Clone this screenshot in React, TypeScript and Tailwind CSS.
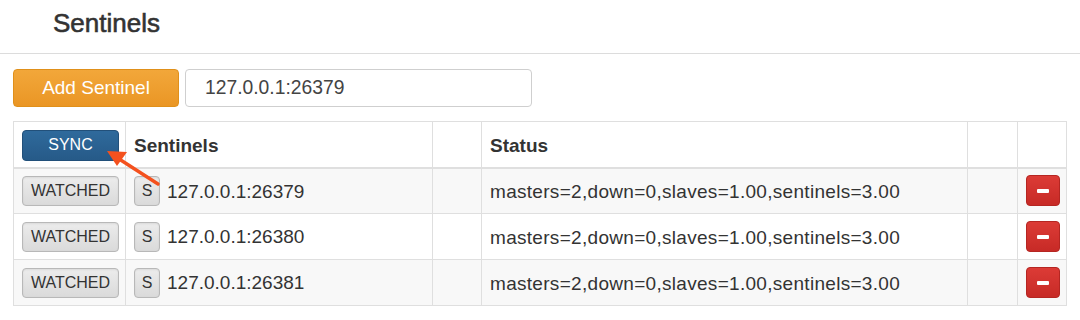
import React from 'react';

const rows = [
  { addr: '127.0.0.1:26379', striped: true },
  { addr: '127.0.0.1:26380', striped: false },
  { addr: '127.0.0.1:26381', striped: true },
];

const status = 'masters=2,down=0,slaves=1.00,sentinels=3.00';

function GrayButton({ children, className = '' }: { children: React.ReactNode; className?: string }) {
  return (
    <button
      className={`h-[30px] rounded-[4px] border border-[#b8b8b8] bg-gradient-to-b from-[#ececec] to-[#dadada] text-[16px] text-[#333] shadow-[inset_0_1px_2px_rgba(0,0,0,0.08)] ${className}`}
    >
      {children}
    </button>
  );
}

export default function App() {
  return (
    <div className="w-[1080px] h-[320px] overflow-hidden bg-white text-[#333] font-['Liberation_Sans',Arial,sans-serif]">
      {/* Header */}
      <div className="h-[54px] border-b border-[#dcdcdc] pl-[53px] pt-[8px]">
        <h1 className="text-[26px] leading-[30px] [-webkit-text-stroke:0.6px_#333]">Sentinels</h1>
      </div>

      {/* Add form */}
      <div className="flex gap-[6px] pl-[13px] mt-[15px]">
        <button className="w-[166px] h-[38px] rounded-[4px] border border-[#e0901a] bg-gradient-to-b from-[#f2a73a] to-[#ea9624] text-white text-[19px]">
          Add Sentinel
        </button>
        <div className="w-[347px] h-[38px] rounded-[4px] border border-[#cfcfcf] flex items-center pl-[19px] text-[19.3px] text-[#444]">
          127.0.0.1:26379
        </div>
      </div>

      {/* Table */}
      <div className="relative ml-[13px] mt-[14px] w-[1053px]">
        <table className="w-[1053px] table-fixed border-collapse border border-[#dfdfdf] text-[19px]">
          <colgroup>
            <col className="w-[112px]" />
            <col className="w-[307px]" />
            <col className="w-[49px]" />
            <col className="w-[486px]" />
            <col className="w-[50px]" />
            <col className="w-[49px]" />
          </colgroup>
          <thead>
            <tr className="h-[46px]">
              <th className="border border-[#dfdfdf] border-b-2 px-2 pt-[2px] text-left align-middle">
                <button className="w-[97px] h-[31px] rounded-[4px] bg-gradient-to-b from-[#2f6a9c] to-[#265a88] border border-[#22507a] text-white text-[16px] font-normal">
                  SYNC
                </button>
              </th>
              <th className="border border-[#dfdfdf] border-b-2 px-2 pt-[4px] text-left font-bold">Sentinels</th>
              <th className="border border-[#dfdfdf] border-b-2" />
              <th className="border border-[#dfdfdf] border-b-2 px-2 pt-[4px] text-left font-bold">Status</th>
              <th className="border border-[#dfdfdf] border-b-2" />
              <th className="border border-[#dfdfdf] border-b-2" />
            </tr>
          </thead>
          <tbody>
            {rows.map(r => (
              <tr key={r.addr} className={`h-[46px] ${r.striped ? 'bg-[#f8f8f8]' : 'bg-white'}`}>
                <td className="border border-[#dfdfdf] px-2 align-middle">
                  <GrayButton className="w-[97px]">WATCHED</GrayButton>
                </td>
                <td className="border border-[#dfdfdf] px-2 align-middle">
                  <div className="flex items-center gap-[7px]">
                    <GrayButton className="w-[26px]">S</GrayButton>
                    <span className="pt-[2px]">{r.addr}</span>
                  </div>
                </td>
                <td className="border border-[#dfdfdf]" />
                <td className="border border-[#dfdfdf] px-2 pt-[3px] align-middle tracking-[0.3px]">{status}</td>
                <td className="border border-[#dfdfdf]" />
                <td className="border border-[#dfdfdf] px-2 align-middle">
                  <button className="w-[34px] h-[31px] rounded-[4px] bg-gradient-to-b from-[#dc3b36] to-[#c72a26] border border-[#b52622] flex items-center justify-center">
                    <span className="block w-[12px] h-[4px] bg-white rounded-[1px]" />
                  </button>
                </td>
              </tr>
            ))}
          </tbody>
        </table>

        {/* annotation arrow */}
        <svg className="absolute left-0 top-0 pointer-events-none" width="200" height="80" viewBox="0 0 200 80">
          <line x1="145" y1="63" x2="103" y2="36" stroke="#f4511e" strokeWidth="3.4" strokeLinecap="round" />
          <polygon points="94,30 114,31 104,45" fill="#f4511e" />
        </svg>
      </div>
    </div>
  );
}
